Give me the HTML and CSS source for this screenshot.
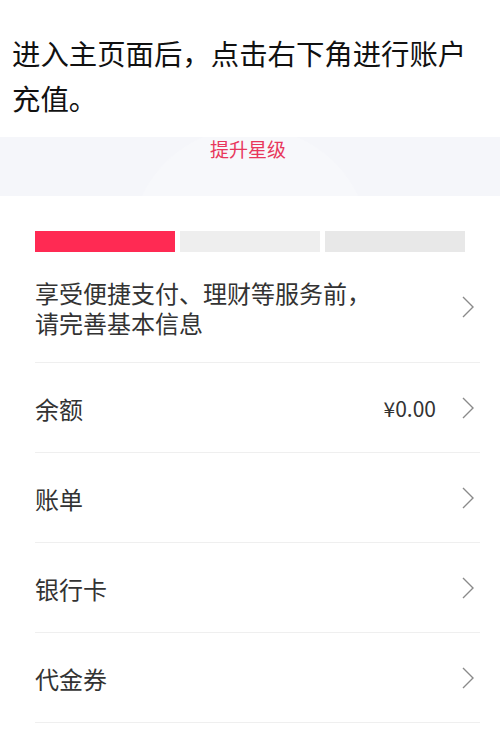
FILE: index.html
```html
<!DOCTYPE html>
<html lang="zh-CN">
  <head>
    <meta charset="UTF-8" />
    <meta name="viewport" content="width=device-width, initial-scale=1.0" />
    <title>账户充值</title>
    <link rel="stylesheet" href="styles.css">
  </head>
  <body>
    <p class="intro">进入主页面后，点击右下角进行账户充值。</p>

    <div class="level-band">
      <span class="level-link">提升星级</span>
    </div>

    <div class="steps">
      <div class="step active"></div>
      <div class="step"></div>
      <div class="step last"></div>
    </div>

    <ul class="menu">
      <li class="menu-item tall">
        <div class="label">
          <div>享受便捷支付、理财等服务前，</div>
          <div>请完善基本信息</div>
        </div>
        <svg class="arrow" viewBox="0 0 12 22"><path d="M1 1 L11 11 L1 21" /></svg>
      </li>
      <li class="menu-item">
        <span class="label">余额</span>
        <span class="value">¥0.00</span>
        <svg class="arrow" viewBox="0 0 12 22"><path d="M1 1 L11 11 L1 21" /></svg>
      </li>
      <li class="menu-item">
        <span class="label">账单</span>
        <svg class="arrow" viewBox="0 0 12 22"><path d="M1 1 L11 11 L1 21" /></svg>
      </li>
      <li class="menu-item">
        <span class="label">银行卡</span>
        <svg class="arrow" viewBox="0 0 12 22"><path d="M1 1 L11 11 L1 21" /></svg>
      </li>
      <li class="menu-item">
        <span class="label">代金券</span>
        <svg class="arrow" viewBox="0 0 12 22"><path d="M1 1 L11 11 L1 21" /></svg>
      </li>
    </ul>
  </body>
</html>
```

FILE: styles.css
```css
body {
  font-family: "Noto Sans CJK SC", "Noto Sans", sans-serif;
  margin: 0;
  padding: 0;
  background-color: #fff;
  color: #333;
  overflow: hidden;
}
.intro {
  margin: 0;
  padding: 30px 20px 0 12px;
  font-size: 28.4px;
  line-height: 45px;
  color: #111;
}
.level-band {
  margin-top: 17px;
  padding-top: 1px;
  height: 58px;
  background-color: #f5f6fa;
  background-image: radial-gradient(circle 120px at 250px 110px, #f7f8fb 99%, transparent 100%);
  text-align: center;
}
.level-link {
  display: inline-block;
  margin-left: -4px;
  font-size: 19px;
  line-height: 22px;
  color: #e8375c;
}
.steps {
  display: flex;
  gap: 5px;
  margin: 35px 35px 0 35px;
}
.step {
  flex: 1;
  height: 21px;
  background-color: #eeeeee;
}
.step.active {
  background-color: #ff2a53;
}
.step.last {
  background-color: #e8e8e8;
}
.menu {
  list-style: none;
  margin: 0;
  padding: 0 20px 0 35px;
}
.menu-item {
  display: flex;
  align-items: center;
  height: 89px;
  border-bottom: 1px solid #efefef;
  font-size: 24px;
}
.menu-item.tall {
  height: 110px;
  line-height: 30px;
}
.label {
  flex: 1;
  padding-top: 1px;
}
.value {
  margin-right: 26px;
  font-size: 21px;
  color: #333;
}
.arrow {
  width: 12px;
  height: 22px;
  margin-right: 6px;
  fill: none;
  stroke: #8a8a8a;
  stroke-width: 1.4;
}
```
